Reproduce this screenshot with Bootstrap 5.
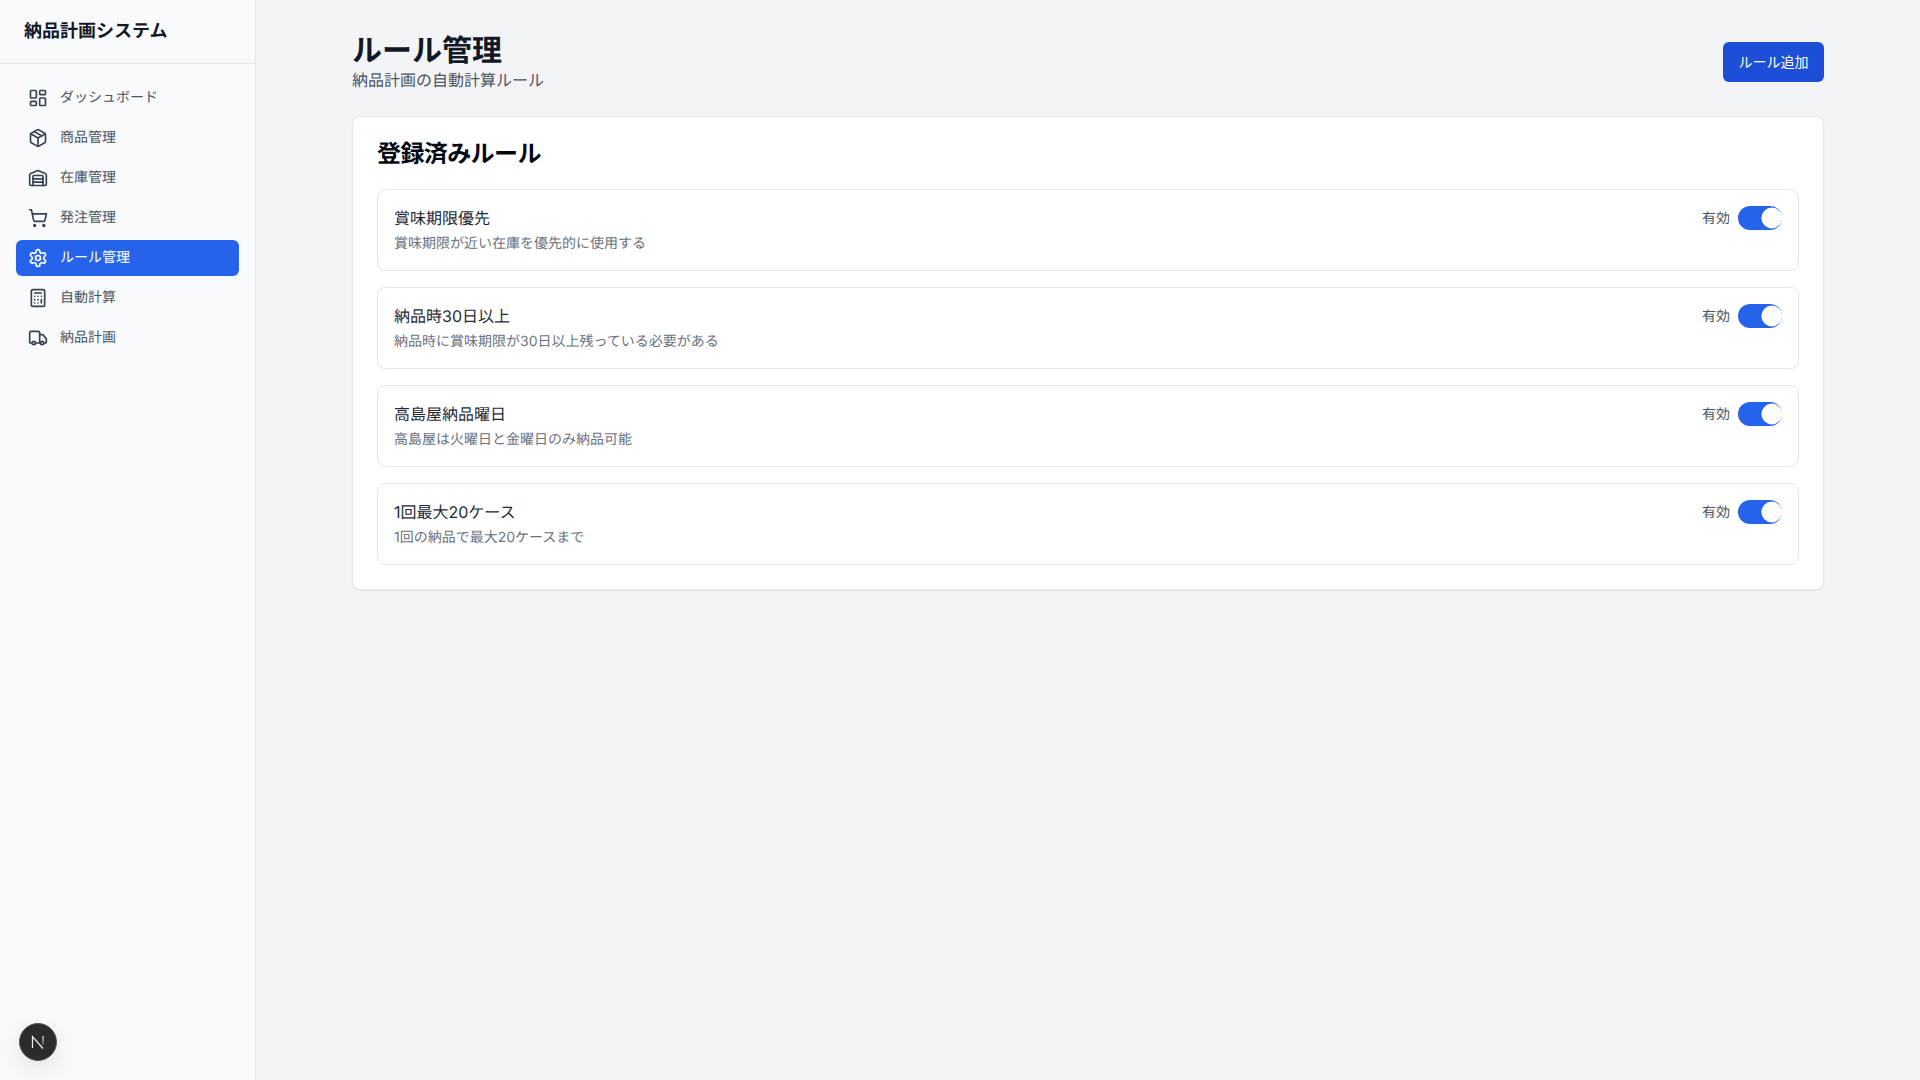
<!DOCTYPE html>
<html lang="ja">
<head>
<meta charset="utf-8">
<title>ルール管理</title>
<link href="https://cdn.jsdelivr.net/npm/bootstrap@5.3.0/dist/css/bootstrap.min.css" rel="stylesheet">
<style>
html,body{height:100%}
body{font-family:Inter,"Noto Sans CJK JP",sans-serif;background:#f3f4f6;color:#111827;text-rendering:geometricPrecision}
.app-side{width:256px;height:100vh;background:#f9fafb;border-right:1px solid #e5e7eb;flex:none}
.side-head{height:64px;padding:1px 24px 0;border-bottom:1px solid #e5e7eb;font-size:18px;font-weight:600;line-height:28px;color:#111827}
.side-nav{padding:16px;gap:4px}
.side-link{height:36px;padding:0 12px;gap:12px;font-size:14px;line-height:20px;color:#4b5563;border-radius:6px}
.side-link svg{width:20px;height:20px;fill:none;stroke:#374151;stroke-width:2;stroke-linecap:round;stroke-linejoin:round;flex:none}
.side-link.is-active,.side-link.is-active:hover,.side-link.is-active:focus{background:#2563eb;color:#fff}
.side-link.is-active svg{stroke:#fff}
.side-link:hover,.side-link:focus{color:#4b5563}
.page-wrap{max-width:1536px;padding:32px}
.page-title{font-size:30px;line-height:38px;font-weight:700;color:#111827;margin:0 0 -2px}
.page-sub{font-size:16px;line-height:24px;color:#4b5563;margin:0}
.add-btn,.add-btn:hover{background:#1d4ed8;color:#fff;font-size:14px;line-height:20px;height:40px;padding:0 15.5px;border:0;border-radius:6px}
.rules-card{border:1px solid #e5e7eb;border-radius:8px;padding:24px;box-shadow:0 1px 2px rgba(0,0,0,.05);background:#fff}
.rules-title{font-size:24px;line-height:26px;font-weight:600;letter-spacing:-.6px;color:#030712;margin:0 0 22px}
.rule-row{border:1px solid #e5e7eb;border-radius:8px;padding:16px;height:82px}
.rule-name{font-size:16px;line-height:24px;color:#1f2937;margin:0 0 4px;font-weight:400}
.rule-desc{font-size:14px;line-height:20px;color:#6b7280;margin:0}
.rule-state{font-size:14px;line-height:20px;color:#4b5563;gap:8px;height:24px;margin-top:0}
.state-text{padding-top:1px}
.form-switch.rule-switch{padding:0;margin:0;min-height:0;height:24px;line-height:0}
.form-switch.rule-switch .form-check-input{width:44px;height:24px;margin:0;float:none;border:0;background-color:#2563eb;background-position:right center;background-size:44px 24px;border-radius:12px;background-image:url("data:image/svg+xml,%3csvg xmlns='http://www.w3.org/2000/svg' viewBox='0 0 44 24'%3e%3ccircle cx='33.8' cy='12' r='10.4' fill='%23fff'/%3e%3c/svg%3e")}
.dev-badge{position:fixed;left:19px;bottom:19px;width:38px;height:38px;border-radius:50%;background:#2b2b2b;border:1px solid #555;box-shadow:0 8px 24px rgba(0,0,0,.1)}
.dev-badge svg{width:18px;height:18px}
</style>
</head>
<body>
<div class="d-flex">
  <aside class="app-side d-flex flex-column">
    <div class="side-head d-flex align-items-center">納品計画システム</div>
    <nav class="nav flex-column side-nav">
      <a class="nav-link side-link d-flex align-items-center" href="#"><svg viewBox="0 0 24 24"><rect width="7" height="9" x="3" y="3" rx="1"/><rect width="7" height="5" x="14" y="3" rx="1"/><rect width="7" height="9" x="14" y="12" rx="1"/><rect width="7" height="5" x="3" y="16" rx="1"/></svg>ダッシュボード</a>
      <a class="nav-link side-link d-flex align-items-center" href="#"><svg viewBox="0 0 24 24"><path d="M11 21.73a2 2 0 0 0 2 0l7-4A2 2 0 0 0 21 16V8a2 2 0 0 0-1-1.73l-7-4a2 2 0 0 0-2 0l-7 4A2 2 0 0 0 3 8v8a2 2 0 0 0 1 1.73z"/><path d="M12 22V12"/><polyline points="3.29 7 12 12 20.71 7"/><path d="m7.5 4.27 9 5.15"/></svg>商品管理</a>
      <a class="nav-link side-link d-flex align-items-center" href="#"><svg viewBox="0 0 24 24"><path d="M18 21V10a1 1 0 0 0-1-1H7a1 1 0 0 0-1 1v11"/><path d="M22 19a2 2 0 0 1-2 2H4a2 2 0 0 1-2-2V8.35a2 2 0 0 1 1.26-1.86l8-3.2a2 2 0 0 1 1.48 0l8 3.2A2 2 0 0 1 22 8.35z"/><path d="M6 13h12"/><path d="M6 17h12"/></svg>在庫管理</a>
      <a class="nav-link side-link d-flex align-items-center" href="#"><svg viewBox="0 0 24 24"><circle cx="8" cy="21" r="1"/><circle cx="19" cy="21" r="1"/><path d="M2.05 2.05h2l2.66 12.42a2 2 0 0 0 2 1.58h9.78a2 2 0 0 0 1.95-1.57l1.65-7.43H5.12"/></svg>発注管理</a>
      <a class="nav-link side-link is-active d-flex align-items-center" href="#"><svg viewBox="0 0 24 24"><path d="M12.22 2h-.44a2 2 0 0 0-2 2v.18a2 2 0 0 1-1 1.73l-.43.25a2 2 0 0 1-2 0l-.15-.08a2 2 0 0 0-2.73.73l-.22.38a2 2 0 0 0 .73 2.73l.15.1a2 2 0 0 1 1 1.72v.51a2 2 0 0 1-1 1.74l-.15.09a2 2 0 0 0-.73 2.73l.22.38a2 2 0 0 0 2.73.73l.15-.08a2 2 0 0 1 2 0l.43.25a2 2 0 0 1 1 1.73V20a2 2 0 0 0 2 2h.44a2 2 0 0 0 2-2v-.18a2 2 0 0 1 1-1.73l.43-.25a2 2 0 0 1 2 0l.15.08a2 2 0 0 0 2.73-.73l.22-.39a2 2 0 0 0-.73-2.73l-.15-.08a2 2 0 0 1-1-1.74v-.5a2 2 0 0 1 1-1.74l.15-.09a2 2 0 0 0 .73-2.73l-.22-.38a2 2 0 0 0-2.73-.73l-.15.08a2 2 0 0 1-2 0l-.43-.25a2 2 0 0 1-1-1.73V4a2 2 0 0 0-2-2z"/><circle cx="12" cy="12" r="3"/></svg>ルール管理</a>
      <a class="nav-link side-link d-flex align-items-center" href="#"><svg viewBox="0 0 24 24"><rect width="16" height="20" x="4" y="2" rx="2"/><line x1="8" x2="16" y1="6" y2="6"/><line x1="16" x2="16" y1="14" y2="18"/><path d="M16 10h.01"/><path d="M12 10h.01"/><path d="M8 10h.01"/><path d="M12 14h.01"/><path d="M8 14h.01"/><path d="M12 18h.01"/><path d="M8 18h.01"/></svg>自動計算</a>
      <a class="nav-link side-link d-flex align-items-center" href="#"><svg viewBox="0 0 24 24"><path d="M14 18V6a2 2 0 0 0-2-2H4a2 2 0 0 0-2 2v11a1 1 0 0 0 1 1h2"/><path d="M15 18H9"/><path d="M19 18h2a1 1 0 0 0 1-1v-3.65a1 1 0 0 0-.22-.624l-3.48-4.35A1 1 0 0 0 17.52 8H14"/><circle cx="17" cy="18" r="2"/><circle cx="7" cy="18" r="2"/></svg>納品計画</a>
    </nav>
  </aside>
  <main class="flex-grow-1">
    <div class="page-wrap mx-auto">
      <header class="d-flex justify-content-between align-items-center mb-4">
        <div>
          <h1 class="page-title">ルール管理</h1>
          <p class="page-sub">納品計画の自動計算ルール</p>
        </div>
        <button class="btn add-btn" type="button">ルール追加</button>
      </header>
      <section class="rules-card">
        <h2 class="rules-title">登録済みルール</h2>
        <div class="d-flex flex-column gap-3">
          <div class="rule-row d-flex justify-content-between align-items-start">
            <div><h3 class="rule-name">賞味期限優先</h3><p class="rule-desc">賞味期限が近い在庫を優先的に使用する</p></div>
            <div class="rule-state d-flex align-items-center"><span class="state-text">有効</span><div class="form-check form-switch rule-switch"><input class="form-check-input" type="checkbox" role="switch" checked aria-label="有効"></div></div>
          </div>
          <div class="rule-row d-flex justify-content-between align-items-start">
            <div><h3 class="rule-name">納品時30日以上</h3><p class="rule-desc">納品時に賞味期限が30日以上残っている必要がある</p></div>
            <div class="rule-state d-flex align-items-center"><span class="state-text">有効</span><div class="form-check form-switch rule-switch"><input class="form-check-input" type="checkbox" role="switch" checked aria-label="有効"></div></div>
          </div>
          <div class="rule-row d-flex justify-content-between align-items-start">
            <div><h3 class="rule-name">高島屋納品曜日</h3><p class="rule-desc">高島屋は火曜日と金曜日のみ納品可能</p></div>
            <div class="rule-state d-flex align-items-center"><span class="state-text">有効</span><div class="form-check form-switch rule-switch"><input class="form-check-input" type="checkbox" role="switch" checked aria-label="有効"></div></div>
          </div>
          <div class="rule-row d-flex justify-content-between align-items-start">
            <div><h3 class="rule-name">1回最大20ケース</h3><p class="rule-desc">1回の納品で最大20ケースまで</p></div>
            <div class="rule-state d-flex align-items-center"><span class="state-text">有効</span><div class="form-check form-switch rule-switch"><input class="form-check-input" type="checkbox" role="switch" checked aria-label="有効"></div></div>
          </div>
        </div>
      </section>
    </div>
  </main>
</div>
<div class="dev-badge d-flex align-items-center justify-content-center">
  <svg viewBox="0 0 18 18" fill="none"><defs><linearGradient id="ng" gradientUnits="userSpaceOnUse" x1="0" y1="3" x2="0" y2="13"><stop offset="0" stop-color="#fff"/><stop offset="1" stop-color="#fff" stop-opacity=".3"/></linearGradient></defs><path d="M3.5 15V3.5l10.5 12" stroke="#f0f0f0" stroke-width="1.2"/><path d="M14 3v9" stroke="url(#ng)" stroke-width="1.2"/></svg>
</div>
<script src="https://cdn.jsdelivr.net/npm/bootstrap@5.3.0/dist/js/bootstrap.bundle.min.js"></script>
</body>
</html>
